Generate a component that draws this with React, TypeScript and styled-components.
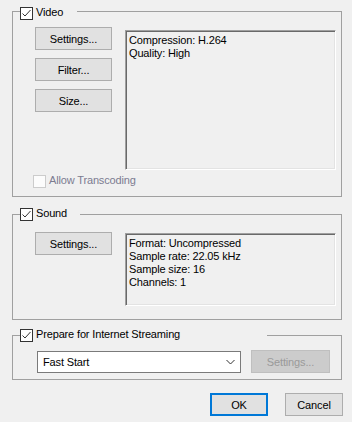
import React from 'react';
import styled, { createGlobalStyle } from 'styled-components';

const GlobalStyle = createGlobalStyle`
  html, body {
    margin: 0;
    padding: 0;
    background: #f0f0f0;
  }
  body {
    font-family: "Liberation Sans", Arial, sans-serif;
    font-size: 11px;
    color: #000;
  }
`;

const Dialog = styled.div`
  width: 352px;
  height: 422px;
  box-sizing: border-box;
  padding: 11px 10px 0 12px;
  background: #f0f0f0;
  display: flex;
  flex-direction: column;
`;

const Group = styled.div<{ $gapAbove?: number }>`
  position: relative;
  border: 1px solid #a0a0a0;
  margin-top: ${(p) => p.$gapAbove ?? 0}px;
  display: flex;
  flex-direction: column;
`;

// caption sits over the top border of the group box
const Legend = styled.div<{ $width: number; $top: number }>`
  position: absolute;
  left: 7px;
  top: ${(p) => p.$top}px;
  width: ${(p) => p.$width}px;
  height: 13px;
  background: #f0f0f0;
  display: flex;
  align-items: flex-start;
  gap: 3px;
`;

const CaptionText = styled.span<{ $disabled?: boolean }>`
  line-height: 13px;
  margin-top: -1px;
  white-space: nowrap;
  letter-spacing: -0.15px;
  color: ${(p) => (p.$disabled ? '#7c7c90' : '#000')};
`;

const Box = styled.span<{ $disabled?: boolean }>`
  width: 13px;
  height: 13px;
  box-sizing: border-box;
  flex: none;
  border: 1px solid ${(p) => (p.$disabled ? '#cccccc' : '#333333')};
  background: ${(p) => (p.$disabled ? '#fcfcfc' : '#ffffff')};
  display: flex;
`;

const Check: React.FC<{ checked?: boolean; disabled?: boolean }> = ({ checked, disabled }) => (
  <Box $disabled={disabled}>
    {checked && (
      <svg width="11" height="11" viewBox="0 0 11 11">
        <polyline points="1.5,5.5 4,8 9.5,2" fill="none" stroke="#333" strokeWidth="1" />
      </svg>
    )}
  </Box>
);

const Row = styled.div<{ $pt: number; $pl: number; $pb?: number }>`
  display: flex;
  align-items: flex-start;
  padding: ${(p) => p.$pt}px 5px ${(p) => p.$pb ?? 0}px ${(p) => p.$pl}px;
`;

const ButtonColumn = styled.div`
  display: flex;
  flex-direction: column;
  gap: 8px;
  width: 77px;
  margin-right: 13px;
`;

const Button = styled.div<{ $width?: number; $default?: boolean; $disabled?: boolean }>`
  width: ${(p) => p.$width ?? 77}px;
  height: 23px;
  box-sizing: border-box;
  flex: none;
  display: flex;
  align-items: center;
  justify-content: center;
  background: ${(p) => (p.$disabled ? '#cccccc' : '#e1e1e1')};
  border: ${(p) =>
    p.$default ? '2px solid #0078d7' : `1px solid ${p.$disabled ? '#bfbfbf' : '#adadad'}`};
  color: ${(p) => (p.$disabled ? '#9a9a9a' : '#000')};
  letter-spacing: -0.15px;
`;

const InfoBox = styled.div<{ $height: number; $mt: number }>`
  width: 212px;
  height: ${(p) => p.$height}px;
  margin-top: ${(p) => p.$mt}px;
  box-sizing: border-box;
  border: 1px solid;
  border-color: #a0a0a0 #ffffff #ffffff #a0a0a0;
  box-shadow: inset 1px 1px 0 #696969, inset -1px -1px 0 #e3e3e3;
  padding: 3px 3px 0 3px;
  line-height: 13px;
  letter-spacing: -0.15px;
  white-space: nowrap;
  overflow: hidden;
`;

const CheckRow = styled.div`
  display: flex;
  align-items: flex-start;
  gap: 3px;
  margin: 5px 0 8px 20px;
`;

const Combo = styled.div`
  width: 204px;
  height: 22px;
  margin: 1px 10px 0 0;
  box-sizing: border-box;
  background: #fff;
  border: 1px solid #7a7a7a;
  display: flex;
  align-items: center;
  justify-content: space-between;
  padding: 0 5px 0 5px;
  letter-spacing: -0.15px;
`;

const Footer = styled.div`
  display: flex;
  justify-content: flex-end;
  gap: 17px;
  margin-top: 13px;
  padding-right: 0;
  margin-right: -1px;
`;

export default function App() {
  return (
    <>
      <GlobalStyle />
      <Dialog>
        <Group>
          <Legend $width={57} $top={-5}>
            <Check checked />
            <CaptionText>Video</CaptionText>
          </Legend>
          <Row $pt={15} $pl={22}>
            <ButtonColumn>
              <Button>Settings...</Button>
              <Button>Filter...</Button>
              <Button>Size...</Button>
            </ButtonColumn>
            <InfoBox $height={140} $mt={3}>
              Compression: H.264
              <br />
              Quality: High
            </InfoBox>
          </Row>
          <CheckRow>
            <Check disabled />
            <CaptionText $disabled>Allow Transcoding</CaptionText>
          </CheckRow>
        </Group>

        <Group $gapAbove={17}>
          <Legend $width={60} $top={-7}>
            <Check checked />
            <CaptionText>Sound</CaptionText>
          </Legend>
          <Row $pt={17} $pl={22} $pb={13}>
            <ButtonColumn>
              <Button>Settings...</Button>
            </ButtonColumn>
            <InfoBox $height={73} $mt={1}>
              Format: Uncompressed
              <br />
              Sample rate: 22.05 kHz
              <br />
              Sample size: 16
              <br />
              Channels: 1
            </InfoBox>
          </Row>
        </Group>

        <Group $gapAbove={15}>
          <Legend $width={247} $top={-7}>
            <Check checked />
            <CaptionText>Prepare for Internet Streaming</CaptionText>
          </Legend>
          <Row $pt={14} $pl={24} $pb={6}>
            <Combo>
              <span>Fast Start</span>
              <svg width="9" height="6" viewBox="0 0 9 6">
                <polyline points="0.5,1 4.5,5 8.5,1" fill="none" stroke="#333" strokeWidth="1" />
              </svg>
            </Combo>
            <Button $width={79} $disabled>
              Settings...
            </Button>
          </Row>
        </Group>

        <Footer>
          <Button $width={58} $default>
            OK
          </Button>
          <Button $width={58}>Cancel</Button>
        </Footer>
      </Dialog>
    </>
  );
}
